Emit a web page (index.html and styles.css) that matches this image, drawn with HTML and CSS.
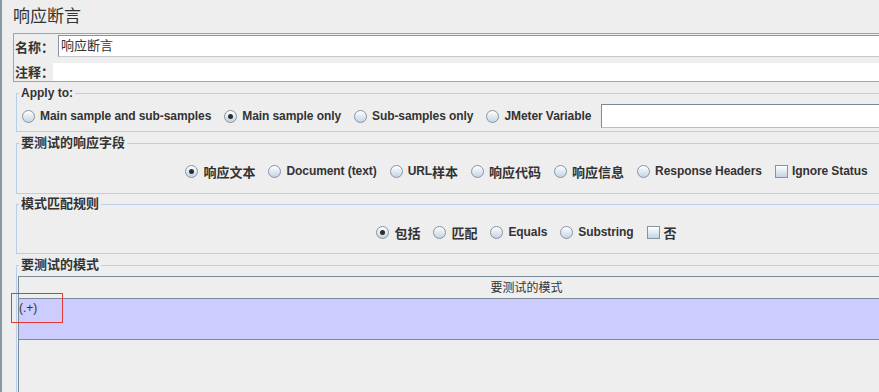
FILE: index.html
```html
<html>
	<head>
		<meta charset="utf-8">
		<link rel="stylesheet" href="styles.css">
	</head>
	<body>
		<div class="page">
			<h1 class="title zh">响应断言</h1>
			<div class="namebox">
				<div class="namerow">
					<span class="lbl wide zh">名称：</span>
					<div class="field name zh">响应断言</div>
				</div>
				<div class="namerow gap">
					<span class="lbl zh">注释：</span>
					<div class="field note"></div>
				</div>
			</div>
			<fieldset class="group apply">
				<legend>Apply to:</legend>
				<div class="opts">
					<label class="opt"><i class="radio"></i>Main sample and sub-samples</label>
					<label class="opt"><i class="radio on"></i>Main sample only</label>
					<label class="opt"><i class="radio"></i>Sub-samples only</label>
					<label class="opt tight"><i class="radio"></i>JMeter Variable</label>
					<div class="varfield"></div>
				</div>
			</fieldset>
			<fieldset class="group fields">
				<legend class="zh">要测试的响应字段</legend>
				<div class="opts center">
					<label class="opt"><i class="radio on"></i><span class="zh">响应文本</span></label>
					<label class="opt"><i class="radio"></i>Document (text)</label>
					<label class="opt"><i class="radio"></i>URL<span class="zh">样本</span></label>
					<label class="opt"><i class="radio"></i><span class="zh">响应代码</span></label>
					<label class="opt"><i class="radio"></i><span class="zh">响应信息</span></label>
					<label class="opt"><i class="radio"></i>Response Headers</label>
					<label class="opt"><i class="check"></i>Ignore Status</label>
				</div>
			</fieldset>
			<fieldset class="group rules">
				<legend class="zh">模式匹配规则</legend>
				<div class="opts center">
					<label class="opt"><i class="radio on"></i><span class="zh">包括</span></label>
					<label class="opt"><i class="radio"></i><span class="zh">匹配</span></label>
					<label class="opt"><i class="radio"></i>Equals</label>
					<label class="opt"><i class="radio"></i>Substring</label>
					<label class="opt"><i class="check"></i><span class="zh">否</span></label>
				</div>
			</fieldset>
			<fieldset class="group patterns">
				<legend class="zh">要测试的模式</legend>
				<div class="tbl">
					<div class="thead">要测试的模式</div>
					<div class="trow">(.+)</div>
				</div>
			</fieldset>
		</div>
		<div class="mark"></div>
	</body>
</html>
```

FILE: styles.css
```css
body {
	margin: 0;
	background-color: #EEE;
	font-family: "Liberation Sans", "Noto Sans CJK SC", sans-serif;
	font-size: 12px;
	color: #333;
	overflow: hidden;
}
.zh {
	font-size: 13px;
	letter-spacing: 0;
}
.page {
	width: 1027px;
	height: 392px;
	border-left: 2px solid #8A98A6;
	padding-left: 11px;
}
.title {
	margin: 0 0 5px;
	padding-top: 6px;
	font-size: 17px;
	line-height: 22px;
	font-weight: normal;
}
.namebox {
	border: 1px solid #A3A3A3;
	padding: 1px 0 0 1px;
}
.namerow {
	display: flex;
	align-items: center;
}
.namerow.gap { margin-top: 5px }
.lbl {
	width: 38px;
	font-weight: bold;
	white-space: nowrap;
	overflow: hidden;
}
.lbl.wide { width: 43px }
.field {
	flex: 1;
	box-sizing: border-box;
	background: #FFF;
}
.field.name {
	height: 22px;
	border: 1px solid #8896A4;
	border-bottom-color: #C4C8CC;
	border-right: none;
	padding-left: 2px;
	line-height: 20px;
}
.field.note { height: 18px }
.group {
	margin: 4px 3px 0;
	padding: 0;
	border: 1px solid #B8CFE5;
	min-width: 0;
}
.group.rules { margin-top: 3px }
legend {
	margin-left: 2px;
	padding: 0 2px;
	font-weight: bold;
	line-height: 14px;
}
.opts {
	display: flex;
	align-items: center;
	height: 14px;
}
.apply .opts {
	height: 24px;
	padding: 4px 0 3px 5px;
}
.fields .opts { padding: 14px 0 15px }
.rules .opts { padding: 14px 0 14px }
.center { justify-content: center }
.opt {
	display: flex;
	align-items: center;
	font-weight: bold;
	white-space: nowrap;
	letter-spacing: -0.08px;
	margin-right: 13px;
}
.opt:last-child { margin-right: 0 }
.opt.tight { margin-right: 10px }
.radio, .check {
	flex: none;
	position: relative;
	width: 13px;
	height: 13px;
	box-sizing: border-box;
	border: 1px solid #8494A4;
	background: linear-gradient(#FFF, #C4D3E4);
	margin-right: 5px;
}
.radio { border-radius: 50% }
.radio.on::after {
	content: "";
	position: absolute;
	left: 3px;
	top: 3px;
	width: 5px;
	height: 5px;
	border-radius: 50%;
	background: #2E2E2E;
}
.check { margin-right: 4px }
.varfield {
	flex: 1;
	height: 24px;
	box-sizing: border-box;
	border: 1px solid #7A8A99;
	border-bottom-color: #B5C0CB;
	background: #FFF;
}
.patterns .tbl {
	margin: 4px 1px 0;
	height: 160px;
	border: 1px solid #7A8A99;
	border-bottom: none;
}
.thead {
	height: 19px;
	padding-top: 2px;
	line-height: 19px;
	text-align: center;
	font-size: 12px;
	border-bottom: 1px solid #7A8A99;
}
.trow {
	height: 40px;
	line-height: 18px;
	background: #CCF;
	border-bottom: 1px solid #7A8A99;
}
.mark {
	position: absolute;
	left: 11px;
	top: 293px;
	width: 52px;
	height: 30px;
	box-sizing: border-box;
	border: 1px solid #E53935;
}
```
